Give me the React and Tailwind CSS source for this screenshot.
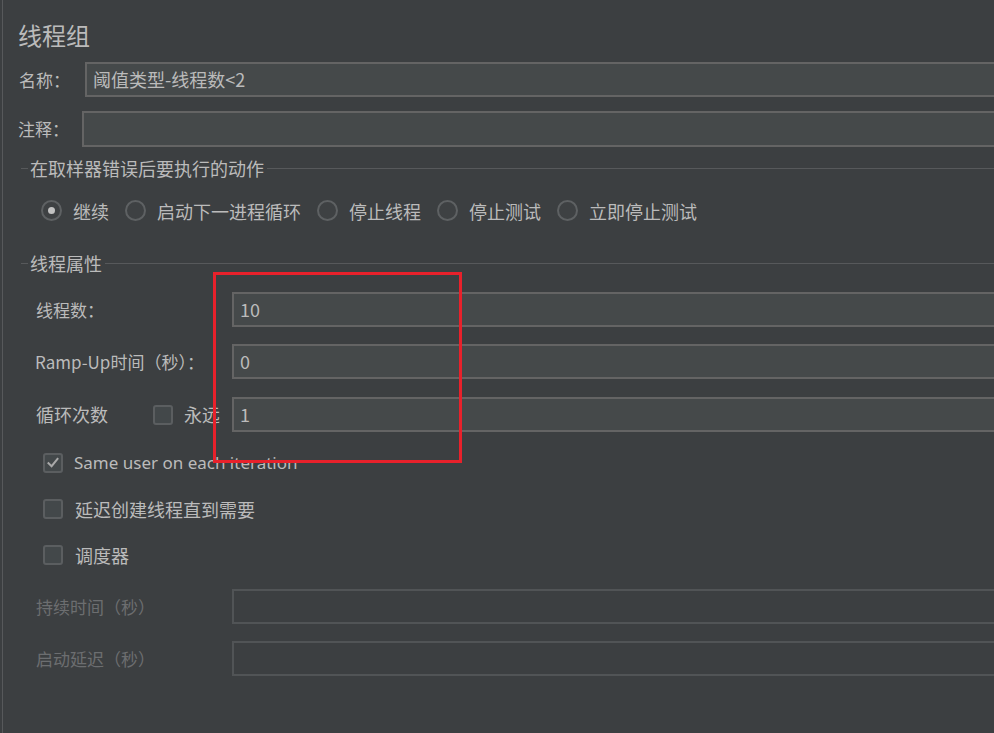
import React from 'react';

const cjk = { fontFamily: '"Noto Sans CJK SC", "Noto Sans", sans-serif' };

function Radio({ checked, label }) {
  return (
    <div className="flex items-center">
      <span className="flex h-[21px] w-[21px] items-center justify-center rounded-full border-2 border-[#5e6163] bg-[#3e4143]">
        {checked && <span className="h-[7px] w-[7px] rounded-full bg-[#c2c2c2]" />}
      </span>
      <span className="ml-[11px] text-[18px] leading-none text-[#bbbbbb]">{label}</span>
    </div>
  );
}

function Checkbox({ checked }) {
  return (
    <span className="flex h-[20px] w-[20px] shrink-0 items-center justify-center rounded-[3px] border-2 border-[#5b5e60] bg-[#43484a]">
      {checked && (
        <svg width="14" height="14" viewBox="0 0 14 14" fill="none">
          <path d="M2.5 7.2 L5.6 10.2 L11.5 3" stroke="#a9a9a9" strokeWidth="2" strokeLinecap="square" />
        </svg>
      )}
    </span>
  );
}

function Legend({ text }) {
  return (
    <div className="flex h-[20px] items-center">
      <span className="ml-[18px] h-px w-[7px] bg-[#57595b]" />
      <span className="ml-[2px] mr-[3px] text-[18px] leading-none text-[#bbbbbb]">{text}</span>
      <span className="h-px flex-1 bg-[#57595b]" />
    </div>
  );
}

function Field({ value, disabled }) {
  return (
    <div
      className={
        'ml-auto flex h-[35px] w-[762px] items-center border-2 border-r-0 pl-[6px] text-[18px] ' +
        (disabled ? 'border-[#515456] bg-[#3c3f41]' : 'border-[#646464] bg-[#45494a] text-[#bbbbbb]')
      }
    >
      {value}
    </div>
  );
}

export default function App() {
  return (
    <div className="relative h-[733px] w-[994px] overflow-hidden bg-[#3c3f41]" style={cjk}>
      <div className="flex h-full">
        <div className="w-[2px]" />
        <div className="w-px bg-[#57595b]" />
        <div className="flex flex-1 flex-col">
          {/* title */}
          <div className="mt-[22px] ml-[15px] h-[26px] text-[24px] leading-[26px] text-[#bbbbbb]">线程组</div>

          {/* name */}
          <div className="mt-[14px] flex h-[35px] items-center">
            <span className="ml-[16px] w-[66px] text-[17px] text-[#bbbbbb]">名称：</span>
            <div className="flex h-[35px] flex-1 items-center border-2 border-r-0 border-[#646464] bg-[#45494a] pl-[6px] text-[18px] text-[#bbbbbb]">
              阈值类型-线程数&lt;2
            </div>
          </div>

          {/* comment */}
          <div className="mt-[14px] flex h-[36px] items-center">
            <span className="ml-[15px] w-[64px] text-[17px] text-[#bbbbbb]">注释：</span>
            <div className="h-[36px] flex-1 border-2 border-r-0 border-[#646464] bg-[#45494a]" />
          </div>

          {/* on sampler error */}
          <div className="mt-[11px]">
            <Legend text="在取样器错误后要执行的动作" />
          </div>
          <div className="mt-[22px] ml-[38px] flex h-[21px] items-center gap-[16px]">
            <Radio checked label="继续" />
            <Radio label="启动下一进程循环" />
            <Radio label="停止线程" />
            <Radio label="停止测试" />
            <Radio label="立即停止测试" />
          </div>

          {/* thread properties */}
          <div className="mt-[32px]">
            <Legend text="线程属性" />
          </div>

          <div className="mt-[19px] flex items-center">
            <span className="ml-[33px] text-[17px] text-[#bbbbbb]">线程数：</span>
            <Field value="10" />
          </div>
          <div className="mt-[17px] flex items-center">
            <span className="ml-[32px] text-[17px] text-[#bbbbbb]">Ramp-Up时间（秒）：</span>
            <Field value="0" />
          </div>
          <div className="mt-[18px] flex items-center">
            <div className="flex w-[217px] items-center overflow-hidden">
              <span className="ml-[33px] text-[18px] text-[#bbbbbb]">循环次数</span>
              <span className="ml-[45px]">
                <Checkbox />
              </span>
              <span className="ml-[11px] whitespace-nowrap text-[18px] text-[#bbbbbb]">永远</span>
            </div>
            <Field value="1" />
          </div>

          <div className="mt-[21px] ml-[40px] flex h-[20px] items-center">
            <Checkbox checked />
            <span className="ml-[11px] text-[17px] text-[#bbbbbb]" style={{ fontFamily: '"Noto Sans", sans-serif' }}>
              Same user on each iteration
            </span>
          </div>
          <div className="mt-[26px] ml-[40px] flex h-[20px] items-center">
            <Checkbox />
            <span className="ml-[12px] text-[18px] text-[#bbbbbb]">延迟创建线程直到需要</span>
          </div>
          <div className="mt-[26px] ml-[40px] flex h-[20px] items-center">
            <Checkbox />
            <span className="ml-[12px] text-[18px] text-[#bbbbbb]">调度器</span>
          </div>

          <div className="mt-[24px] flex items-center">
            <span className="ml-[33px] text-[17px] text-[#6c6e70]">持续时间（秒）</span>
            <Field disabled />
          </div>
          <div className="mt-[17px] flex items-center">
            <span className="ml-[33px] text-[17px] text-[#6c6e70]">启动延迟（秒）</span>
            <Field disabled />
          </div>
        </div>
      </div>

      {/* red highlight box */}
      <div className="absolute left-[213px] top-[272px] h-[191px] w-[249px] border-[3px] border-[#e8212b]" />
    </div>
  );
}
